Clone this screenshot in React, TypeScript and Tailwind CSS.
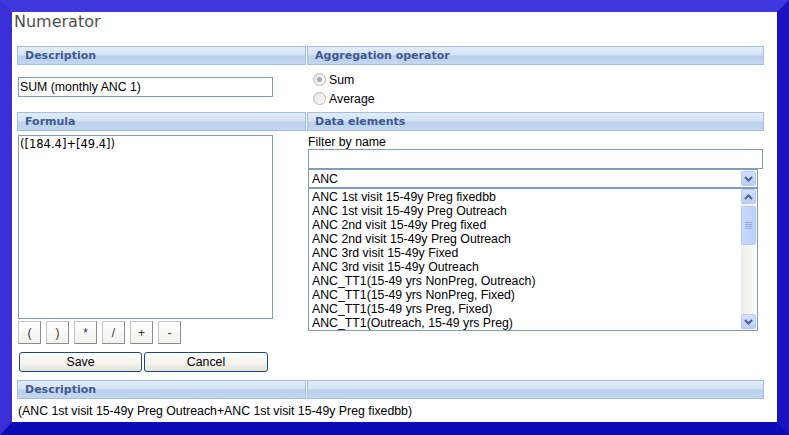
const ITEMS = [
  "ANC 1st visit 15-49y Preg fixedbb",
  "ANC 1st visit 15-49y Preg Outreach",
  "ANC 2nd visit 15-49y Preg fixed",
  "ANC 2nd visit 15-49y Preg Outreach",
  "ANC 3rd visit 15-49y Fixed",
  "ANC 3rd visit 15-49y Outreach",
  "ANC_TT1(15-49 yrs NonPreg, Outreach)",
  "ANC_TT1(15-49 yrs NonPreg, Fixed)",
  "ANC_TT1(15-49 yrs Preg, Fixed)",
  "ANC_TT1(Outreach, 15-49 yrs Preg)",
];

const OPERATORS = ["(", ")", "*", "/", "+", "-"];

const Bar = ({ label, width }: { label: string; width: string }) => (
  <div
    className={`${width} h-[19px] overflow-hidden border border-[#9dbfe8] bg-[linear-gradient(#e3ecf8,#d4e2f4_47%,#bad0ed_53%,#c4d7f0)] pl-[7px] font-['DejaVu_Sans',sans-serif] text-[11px] font-bold leading-[18px] text-[#3f5b8e]`}
  >
    {label}
  </div>
);

const Chevron = ({ up }: { up?: boolean }) => (
  <svg width="9" height="6" viewBox="0 0 9 6">
    <path
      d={up ? "M1 5 L4.5 1.5 L8 5" : "M1 1 L4.5 4.5 L8 1"}
      fill="none"
      stroke="#4d6185"
      strokeWidth="2"
    />
  </svg>
);

const ScrollBtn = ({ up }: { up?: boolean }) => (
  <div className="flex h-[15px] w-[15px] items-center justify-center rounded-[2px] border border-[#b8cbf5] bg-[linear-gradient(#d3e0fd,#b9cdf8)]">
    <Chevron up={up} />
  </div>
);

const Radio = ({ label, checked }: { label: string; checked?: boolean }) => (
  <div className="flex h-[19px] items-center gap-[3px]">
    <div className="flex h-[13px] w-[13px] items-center justify-center rounded-full border border-[#b5b5b5] bg-[linear-gradient(135deg,#e2e2e2,#ffffff)]">
      {checked && <div className="h-[5px] w-[5px] rounded-full bg-[#a9a9a9]" />}
    </div>
    <span>{label}</span>
  </div>
);

export default function App() {
  return (
    <div className="box-border h-[435px] w-[789px] border-[12px] border-b-[13px] border-t-[#4038df] border-l-[#3a2ed7] border-r-[#1b13c2] border-b-[#0d0bb4] bg-white font-['Liberation_Sans',Arial,sans-serif] text-[12.3px] leading-[14px] text-black">
      <div className="h-[34px] pl-[2px] font-['DejaVu_Sans',sans-serif] text-[16px] leading-[19px] text-[#4f4f4f]">
        Numerator
      </div>

      {/* description + aggregation */}
      <div className="flex gap-[1px] pl-[5px]">
        <Bar label="Description" width="w-[289px]" />
        <Bar label="Aggregation operator" width="w-[457px]" />
      </div>
      <div className="flex h-[47px] gap-[1px] pl-[5px]">
        <div className="w-[289px] pt-[12px] pl-[1px]">
          <div className="flex h-[20px] w-[255px] items-center border border-[#7f9db9] pl-[1px]">
            SUM (monthly ANC 1)
          </div>
        </div>
        <div className="w-[457px] pt-[5px] pl-[6px]">
          <Radio label="Sum" checked />
          <Radio label="Average" />
        </div>
      </div>

      {/* formula + data elements */}
      <div className="flex gap-[1px] pl-[5px]">
        <Bar label="Formula" width="w-[289px]" />
        <Bar label="Data elements" width="w-[457px]" />
      </div>
      <div className="flex h-[249px] gap-[1px] pl-[5px]">
        <div className="w-[289px] pt-[4px] pl-[1px]">
          <div className="h-[184px] w-[255px] border border-[#7f9db9] pt-[1px] pl-[1px] font-['DejaVu_Sans',sans-serif] text-[11.5px]">
            ([184.4]+[49.4])
          </div>
          <div className="mt-[2px] flex gap-[5px]">
            {OPERATORS.map((op) => (
              <div
                key={op}
                className="flex h-[23px] w-[23px] items-center justify-center border border-[#c4c4c4] border-r-[#8d8d8d] border-b-[#8d8d8d] bg-[linear-gradient(#ffffff,#f1f1ee)] text-[12px] text-[#333]"
              >
                {op}
              </div>
            ))}
          </div>
          <div className="mt-[8px] ml-[1px] flex gap-[2px]">
            {["Save", "Cancel"].map((b, i) => (
              <div
                key={b}
                className={`${i === 0 ? "w-[123px]" : "w-[124px]"} flex h-[20px] items-center justify-center rounded-[3px] border border-[#1c4a7a] bg-[linear-gradient(#ffffff,#f3f2ec_60%,#e3e1d6)]`}
              >
                {b}
              </div>
            ))}
          </div>
        </div>
        <div className="w-[457px] pt-[4px] pl-[1px]">
          <div>Filter by name</div>
          <div className="h-[20px] w-[455px] border border-[#7f9db9]" />
          <div className="flex h-[19px] w-[450px] items-center justify-between border border-[#7f9db9] pr-[1px] pl-[3px]">
            <span>ANC</span>
            <ScrollBtn />
          </div>
          <div className="flex h-[143px] w-[450px] border border-[#7f9db9]">
            <div className="flex-1 pt-[1px] pl-[3px]">
              {ITEMS.map((it) => (
                <div key={it} className="h-[14px] whitespace-nowrap">
                  {it}
                </div>
              ))}
            </div>
            <div className="flex w-[16px] flex-col bg-[linear-gradient(to_right,#eeede5,#fcfcf9)] pb-[1px]">
              <ScrollBtn up />
              <div className="mt-[2px] flex h-[39px] w-[15px] flex-col items-center justify-center gap-[1px] rounded-[2px] border border-[#b4c8f6] bg-[linear-gradient(to_right,#cbdafc,#bcd0f9)]">
                <div className="h-[1px] w-[7px] bg-[#8faae8]" />
                <div className="h-[1px] w-[7px] bg-[#8faae8]" />
                <div className="h-[1px] w-[7px] bg-[#8faae8]" />
                <div className="h-[1px] w-[7px] bg-[#8faae8]" />
              </div>
              <div className="flex-1" />
              <ScrollBtn />
            </div>
          </div>
        </div>
      </div>

      {/* expression description */}
      <div className="flex gap-[1px] pl-[5px]">
        <Bar label="Description" width="w-[289px]" />
        <Bar label="" width="w-[457px]" />
      </div>
      <div className="mt-[5px] pl-[6px] whitespace-nowrap">
        (ANC 1st visit 15-49y Preg Outreach+ANC 1st visit 15-49y Preg fixedbb)
      </div>
    </div>
  );
}
